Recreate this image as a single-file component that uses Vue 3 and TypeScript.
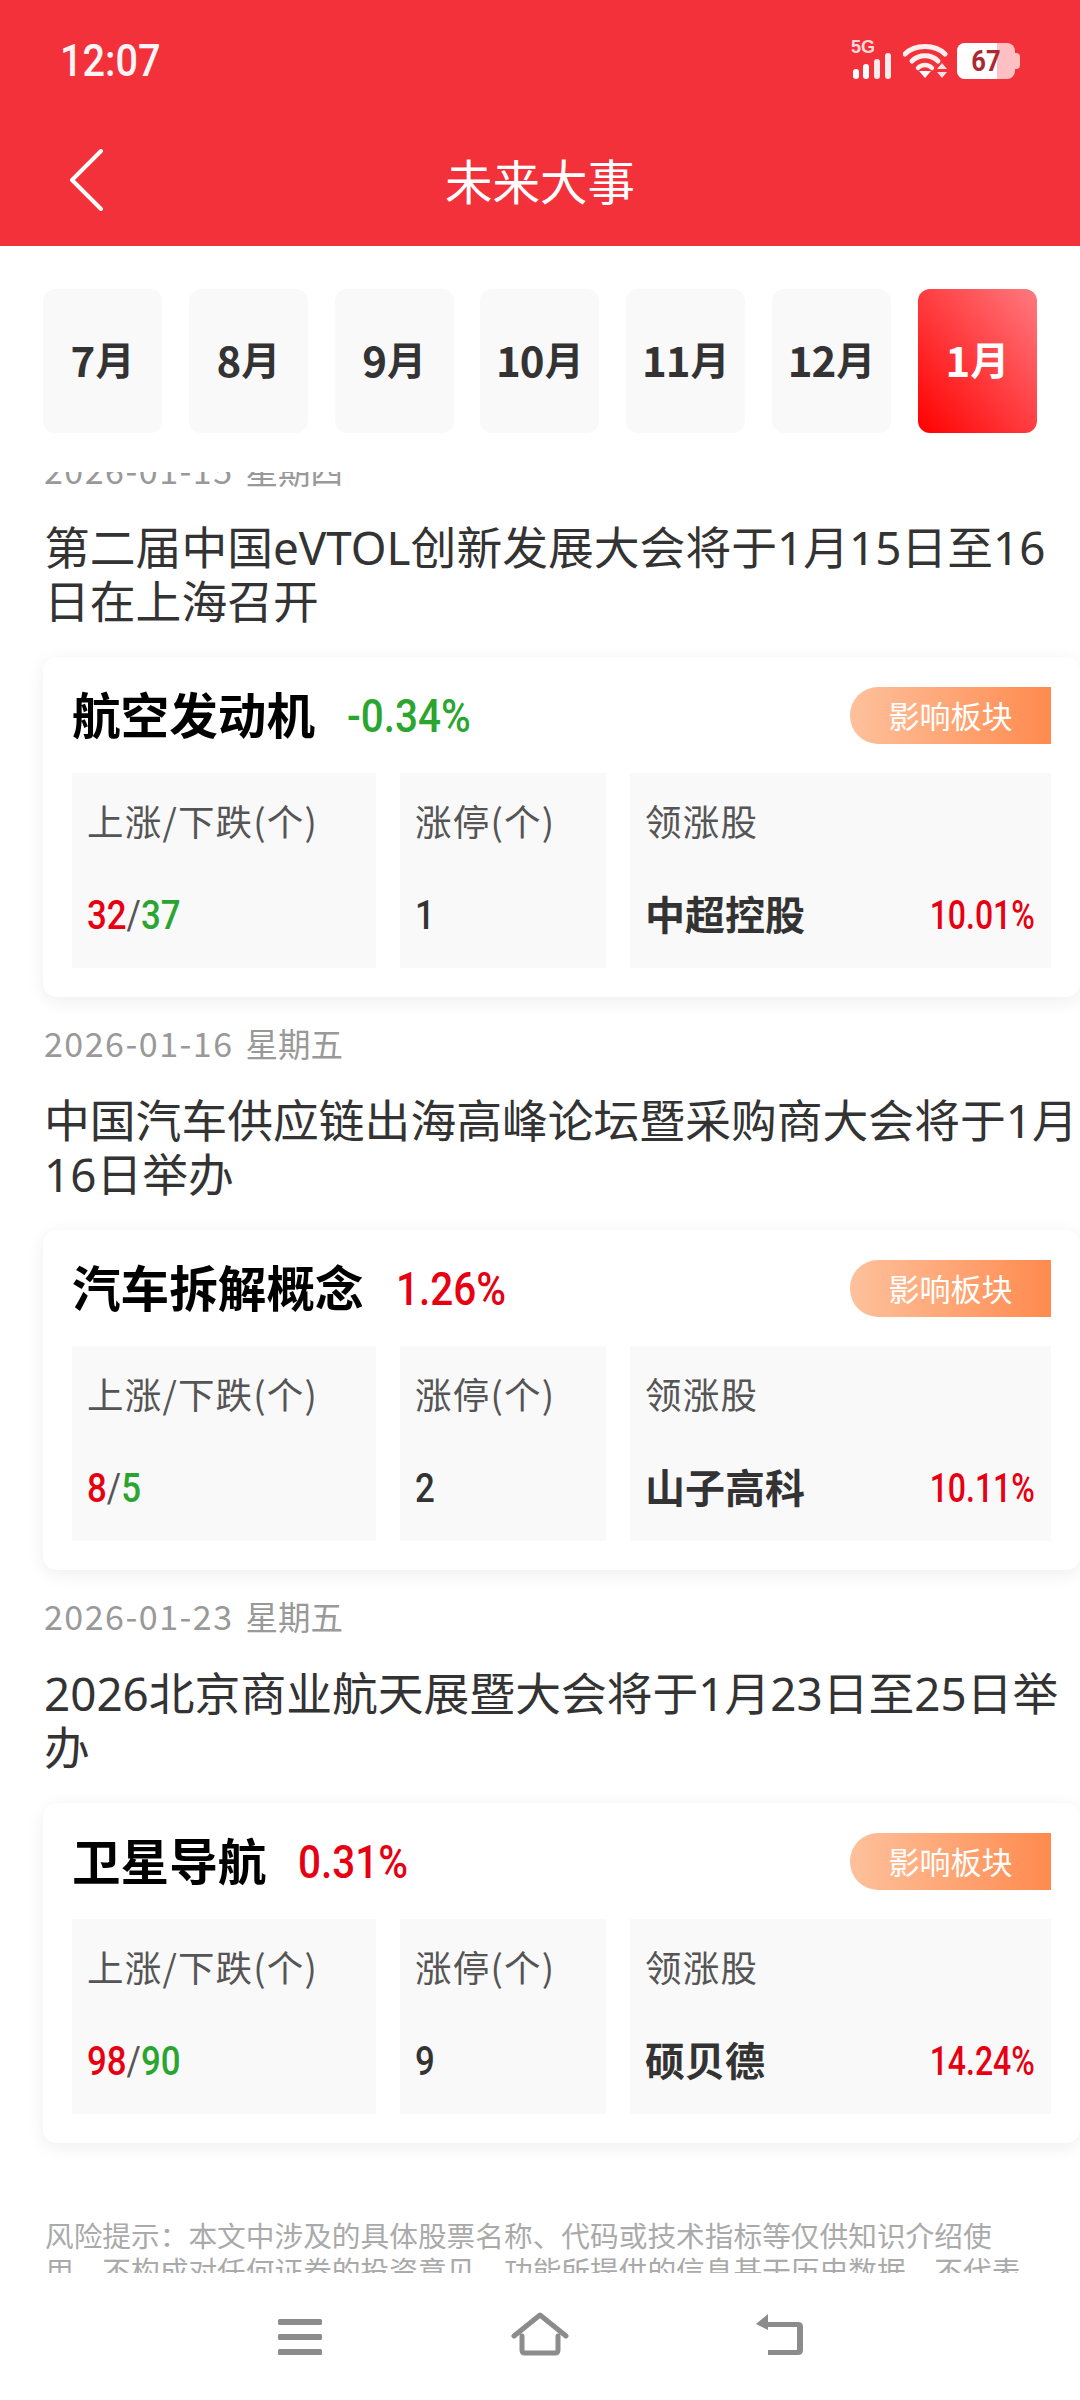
<script setup lang="ts">
import { ref } from 'vue';

interface EventItem {
  day: string;
  week: string;
  title: string;
  sector: string;
  change: string;
  up: boolean;
  rise: number;
  fall: number;
  limitUp: number;
  leader: string;
  leaderChange: string;
}

const months = ['7月', '8月', '9月', '10月', '11月', '12月', '1月'];
const activeMonth = ref('1月');

const events: EventItem[] = [
  {
    day: '2026-01-15',
    week: '星期四',
    title: '第二届中国eVTOL创新发展大会将于1月15日至16日在上海召开',
    sector: '航空发动机',
    change: '-0.34%',
    up: false,
    rise: 32,
    fall: 37,
    limitUp: 1,
    leader: '中超控股',
    leaderChange: '10.01%',
  },
  {
    day: '2026-01-16',
    week: '星期五',
    title: '中国汽车供应链出海高峰论坛暨采购商大会将于1月16日举办',
    sector: '汽车拆解概念',
    change: '1.26%',
    up: true,
    rise: 8,
    fall: 5,
    limitUp: 2,
    leader: '山子高科',
    leaderChange: '10.11%',
  },
  {
    day: '2026-01-23',
    week: '星期五',
    title: '2026北京商业航天展暨大会将于1月23日至25日举办',
    sector: '卫星导航',
    change: '0.31%',
    up: true,
    rise: 98,
    fall: 90,
    limitUp: 9,
    leader: '硕贝德',
    leaderChange: '14.24%',
  },
];

// month label: digits are drawn narrower than the 月
const monthNum = (m: string) => m.replace('月', '');
</script>

<template>
  <div class="page">
    <header class="header">
      <div class="status-bar">
        <span class="time">12:07</span>
        <div class="status-icons">
          <div class="signal">
            <span class="net">5G</span>
            <svg width="40" height="26" viewBox="0 0 40 26">
              <rect x="1" y="16" width="6" height="10" rx="3" fill="#fff" />
              <rect x="11" y="11" width="6" height="15" rx="3" fill="#fff" />
              <rect x="22" y="6" width="6" height="20" rx="3" fill="#fff" opacity="0.9" />
              <rect x="33" y="0" width="6" height="26" rx="3" fill="#fff" opacity="0.9" />
            </svg>
          </div>
          <svg class="wifi" width="45" height="36" viewBox="0 0 45 36">
            <path d="M2 11 C12 1 32 1 42 11" fill="none" stroke="#fff" stroke-width="5" stroke-linecap="round" opacity="0.92" />
            <path d="M9 18 C16 11 28 11 35 18" fill="none" stroke="#fff" stroke-width="5" stroke-linecap="round" opacity="0.92" />
            <path d="M15 25 C19 21 25 21 29 25" fill="none" stroke="#fff" stroke-width="4.5" stroke-linecap="round" opacity="0.92" />
            <path d="M16 28 H28 L22 35 Z" fill="#fff" />
            <path d="M34 26 L39 20 L44 26 Z M34 29 H44 L39 35 Z" fill="#fff" opacity="0.85" />
          </svg>
          <div class="battery">
            <div class="battery-body">
              <span class="battery-fill"></span>
              <span class="battery-text">67</span>
            </div>
            <span class="battery-nub"></span>
          </div>
        </div>
      </div>
      <div class="nav">
        <svg class="back" width="36" height="62" viewBox="0 0 36 62">
          <path d="M33 2 L4 31 L33 60" fill="none" stroke="#fff" stroke-width="4" stroke-linecap="round" stroke-linejoin="round" />
        </svg>
        <h1 class="nav-title">未来大事</h1>
      </div>
    </header>

    <div class="tabs">
      <div
        v-for="m in months"
        :key="m"
        class="tab"
        :class="{ active: m === activeMonth }"
      >
        <span class="tab-num">{{ monthNum(m) }}</span><span>月</span>
      </div>
    </div>

    <main class="scroller">
      <div class="list">
        <section v-for="e in events" :key="e.day" class="event">
          <div class="date">
            <span class="day">{{ e.day }}</span>
            <span class="week">{{ e.week }}</span>
          </div>
          <h2 class="title">{{ e.title }}</h2>
          <div class="card">
            <div class="card-head">
              <span class="sector">{{ e.sector }}</span>
              <span class="change" :class="e.up ? 'red' : 'green'">{{ e.change }}</span>
              <span class="tag">影响板块</span>
            </div>
            <div class="stats">
              <div class="stat">
                <div class="label">上涨/下跌(个)</div>
                <div class="value">
                  <span class="num">
                    <span class="red">{{ e.rise }}</span><span class="slash">/</span><span class="green">{{ e.fall }}</span>
                  </span>
                </div>
              </div>
              <div class="stat">
                <div class="label">涨停(个)</div>
                <div class="value"><span class="num">{{ e.limitUp }}</span></div>
              </div>
              <div class="stat">
                <div class="label">领涨股</div>
                <div class="value leader">
                  <span class="leader-name">{{ e.leader }}</span>
                  <span class="leader-pct red">{{ e.leaderChange }}</span>
                </div>
              </div>
            </div>
          </div>
        </section>
        <p class="risk">风险提示：本文中涉及的具体股票名称、代码或技术指标等仅供知识介绍使用，不构成对任何证券的投资意见。功能所提供的信息基于历史数据，不代表未来走势，投资有风险，入市需谨慎。</p>
      </div>
    </main>

    <footer class="bottom-nav">
      <svg class="nav-menu" width="46" height="37" viewBox="0 0 46 37">
        <rect x="1" y="0" width="44" height="6" rx="1.5" fill="#8c8c8c" />
        <rect x="1" y="15" width="44" height="6" rx="1.5" fill="#8c8c8c" />
        <rect x="1" y="30" width="44" height="6" rx="1.5" fill="#8c8c8c" />
      </svg>
      <svg class="nav-home" width="58" height="44" viewBox="0 0 58 44">
        <path d="M3 24 L29 3 L55 24 M11 24 V38 Q11 41 14 41 H44 Q47 41 47 38 V24" fill="none" stroke="#8c8c8c" stroke-width="5" stroke-linecap="round" stroke-linejoin="round" />
      </svg>
      <svg class="nav-back" width="50" height="44" viewBox="0 0 50 44">
        <path d="M13 1 L1 11 L13 17 V14 H42 V37 H13 V42 H43 Q48 42 48 37 V14 Q48 9 43 9 H13 Z" fill="#8c8c8c" />
      </svg>
    </footer>
  </div>
</template>

<style>
html,
body {
  margin: 0;
  background: #fff;
}
</style>

<style scoped>
.page {
  width: 1080px;
  height: 2400px;
  display: flex;
  flex-direction: column;
  overflow: hidden;
  background: #fff;
  font-family: "Noto Sans CJK SC", "Noto Sans", sans-serif;
  color: #333;
}

.header {
  height: 246px;
  flex: none;
  background: #f2313b;
  color: #fff;
}

.status-bar {
  height: 122px;
  display: flex;
  align-items: center;
  justify-content: space-between;
  padding: 0 60px;
  box-sizing: border-box;
}

.time {
  display: inline-block;
  font-family: Roboto, sans-serif;
  font-size: 44px;
  font-weight: 500;
  transform: scaleX(0.9);
  transform-origin: left center;
  opacity: 0.95;
}

.status-icons {
  display: flex;
  align-items: center;
  gap: 10px;
  height: 36px;
}

.signal {
  width: 41px;
  height: 36px;
  display: flex;
  flex-direction: column;
  justify-content: flex-end;
  position: relative;
}

.signal svg {
  display: block;
}

.net {
  position: absolute;
  left: -1px;
  top: -5px;
  font-family: "Liberation Sans", sans-serif;
  font-size: 18px;
  font-weight: 700;
  line-height: 18px;
  color: #ffd9db;
}

.wifi {
  display: block;
}

.battery {
  display: flex;
  align-items: center;
  margin-left: -1px;
}

.battery-body {
  width: 58px;
  height: 36px;
  border-radius: 8px;
  background: #ffc0c4;
  position: relative;
  overflow: hidden;
}

.battery-fill {
  position: absolute;
  left: 0;
  top: 0;
  bottom: 0;
  width: 40px;
  background: #fff;
}

.battery-text {
  position: relative;
  display: block;
  text-align: center;
  font-family: Roboto, sans-serif;
  font-size: 30px;
  font-weight: 700;
  line-height: 36px;
  color: #a92a32;
  transform: scaleX(0.85);
}

.battery-nub {
  width: 5px;
  height: 16px;
  border-radius: 0 4px 4px 0;
  background: #ffc0c4;
}

.nav {
  height: 124px;
  padding-bottom: 8px;
  box-sizing: border-box;
  display: flex;
  align-items: center;
  justify-content: center;
  position: relative;
}

.back {
  position: absolute;
  left: 68px;
  top: 27px;
}

.nav-title {
  margin: 0;
  font-size: 47.5px;
  font-weight: 400;
  line-height: 60px;
}

.tabs {
  flex: none;
  height: 226px;
  box-sizing: border-box;
  padding: 43px 0 39px 43px;
  display: flex;
  gap: 26.8px;
}

.tab {
  width: 119px;
  height: 144px;
  box-sizing: border-box;
  padding-bottom: 6px;
  border-radius: 12px;
  background: #f9f9f9;
  display: flex;
  align-items: center;
  justify-content: center;
  font-size: 39px;
  font-weight: 700;
  color: #333;
}

.tab-num {
  font-size: 42px;
  letter-spacing: -1px;
  margin-right: 1px;
}

.tab.active {
  background: linear-gradient(to top right, #ff0000, #ff7a80);
  color: #fff;
}

.scroller {
  flex: none;
  height: 1801px;
  overflow: hidden;
}

.list {
  margin-top: -25px;
}

.event {
  padding-bottom: 23px;
}

.date {
  padding-left: 44px;
  font-size: 34px;
  line-height: 46px;
  color: #999;
  display: flex;
  gap: 12px;
}

.day {
  letter-spacing: 1.5px;
}

.week {
  font-size: 32.5px;
}

.title {
  margin: 26.5px 0 0;
  padding-left: 44px;
  font-family: "Noto Sans", "Noto Sans CJK SC", sans-serif;
  font-size: 45.8px;
  font-weight: 400;
  line-height: 54px;
  color: #333;
}

.card {
  margin: 29.5px 0 0 43px;
  height: 340px;
  box-sizing: border-box;
  padding: 30px 29px 29px;
  border-radius: 14px;
  background: #fff;
  box-shadow: 0 4px 18px rgba(0, 0, 0, 0.07);
}

.card-head {
  height: 57px;
  display: flex;
  align-items: center;
}

.sector {
  font-size: 48.6px;
  font-weight: 700;
  color: #000;
  line-height: 57px;
  margin-top: -5px;
}

.change {
  display: inline-block;
  margin-left: 32px;
  font-family: Roboto, sans-serif;
  font-size: 47px;
  font-weight: 500;
  line-height: 57px;
  transform: scaleX(0.86);
  transform-origin: left center;
}

.red {
  color: #e60012;
}

.green {
  color: #2aa52f;
}

.tag {
  margin-left: auto;
  width: 201px;
  height: 57px;
  border-radius: 28px 0 0 28px;
  background: linear-gradient(to right, #fec19c, #ff8a4e);
  color: #fff;
  font-size: 31px;
  line-height: 55px;
  text-align: center;
}

.stats {
  margin-top: 29px;
  height: 195px;
  display: grid;
  grid-template-columns: 304px 206px 421px;
  gap: 24px;
}

.stat {
  background: #f9f9f9;
  padding: 26px 16px 0 15px;
}

.label {
  font-size: 36.5px;
  letter-spacing: 1.2px;
  line-height: 44px;
  color: #555;
  white-space: nowrap;
}

.value {
  margin-top: 47px;
  height: 50px;
  font-family: Roboto, sans-serif;
  font-size: 41px;
  font-weight: 500;
  line-height: 50px;
  color: #333;
  white-space: nowrap;
}

.num {
  display: inline-block;
  transform: scaleX(0.85);
  transform-origin: left center;
}

.slash {
  color: #555;
  font-weight: 400;
}

.leader {
  display: flex;
  justify-content: space-between;
}

.leader-name {
  font-family: "Noto Sans CJK SC", sans-serif;
  font-size: 40px;
  font-weight: 700;
  color: #333;
  margin-top: -2px;
}

.leader-pct {
  display: inline-block;
  transform: scaleX(0.78);
  transform-origin: right center;
}

.risk {
  margin: 51px 0 0;
  padding: 0 44px 0 45px;
  font-size: 28.7px;
  line-height: 35px;
  color: #aaa;
}

.bottom-nav {
  flex: none;
  height: 127px;
  box-sizing: border-box;
  padding: 39px 0 0 277px;
  display: flex;
  align-items: flex-start;
  background: #fff;
}

.bottom-nav svg {
  display: block;
  flex: none;
}

.nav-menu {
  margin: 7px 188px 0 0;
}

.nav-home {
  margin-right: 186px;
}

.nav-back {
  margin-top: 1px;
}
</style>
